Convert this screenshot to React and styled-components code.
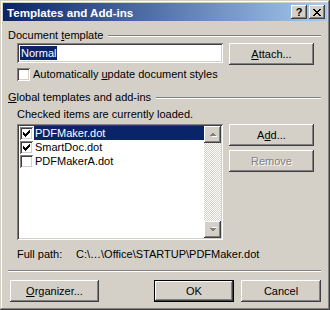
import React from 'react';
import styled, { createGlobalStyle } from 'styled-components';

const GlobalStyle = createGlobalStyle`
  html, body { margin: 0; padding: 0; background: #d4d0c8; }
  body {
    font-family: "Liberation Sans", Arial, sans-serif;
    font-size: 11px;
    color: #000;
  }
`;

const raised = `box-shadow: inset -1px -1px #404040, inset 1px 1px #fff, inset -2px -2px #808080, inset 2px 2px #d4d0c8;`;
const sunken = `box-shadow: inset 1px 1px #808080, inset -1px -1px #fff, inset 2px 2px #404040, inset -2px -2px #d4d0c8;`;

const Window = styled.div`
  width: 330px;
  height: 310px;
  box-sizing: border-box;
  padding: 3px;
  background: #d4d0c8;
  box-shadow: inset -1px -1px #404040, inset 1px 1px #d4d0c8, inset -2px -2px #808080, inset 2px 2px #fff;
  display: flex;
  flex-direction: column;
`;

const TitleBar = styled.div`
  height: 18px;
  display: flex;
  align-items: center;
  padding: 0 2px;
  background: linear-gradient(to right, #0a246a, #a6caf0);
`;

const Title = styled.div`
  flex: 1;
  margin-left: 2px;
  color: #fff;
  font-weight: bold;
  font-size: 11.6px;
`;

const CapButton = styled.div`
  width: 16px;
  height: 14px;
  margin-left: ${({ gap }) => gap || 0}px;
  background: #d4d0c8;
  ${raised}
  display: flex;
  align-items: center;
  justify-content: center;
  font-weight: bold;
  font-size: 11px;
  line-height: 14px;
`;

const Body = styled.div`
  flex: 1;
  display: flex;
  flex-direction: column;
  padding: 0 6px 0 5px;
`;

const GroupHeader = styled.div`
  display: flex;
  align-items: center;
  height: 13px;
  line-height: 13px;
  margin-top: ${({ top }) => top}px;
  gap: 5px;
  &::after {
    content: '';
    flex: 1;
    height: 0;
    border-top: 1px solid #808080;
    border-bottom: 1px solid #fff;
  }
`;

const Row = styled.div`
  display: flex;
  align-items: ${({ align }) => align || 'flex-start'};
  margin-top: ${({ top }) => top}px;
  margin-left: ${({ indent }) => indent || 0}px;
`;

const TextLine = styled.div`
  height: 13px;
  line-height: 13px;
  margin-top: ${({ top }) => top}px;
  margin-left: ${({ indent }) => indent || 0}px;
  white-space: nowrap;
`;

const Input = styled.div`
  width: 206px;
  height: 20px;
  box-sizing: border-box;
  background: #fff;
  ${sunken}
  padding: 3px 3px;
  display: flex;
  align-items: center;
`;

const Selected = styled.span`
  background: #0a246a;
  color: #fff;
  line-height: 14px;
  padding: 0 1px;
`;

const Button = styled.div`
  width: ${({ w }) => w || 85}px;
  height: 22px;
  box-sizing: border-box;
  background: #d4d0c8;
  ${raised}
  border: ${({ primary }) => (primary ? '1px solid #000' : 'none')};
  display: flex;
  align-items: center;
  justify-content: center;
  color: ${({ disabled }) => (disabled ? '#808080' : '#000')};
  text-shadow: ${({ disabled }) => (disabled ? '1px 1px #fff' : 'none')};
  margin-top: ${({ top }) => top || 0}px;
`;

const Check = styled.span`
  width: 13px;
  height: 13px;
  flex: none;
  box-sizing: border-box;
  background: #fff;
  ${sunken}
  display: inline-flex;
  margin-left: ${({ ml }) => ml || 0}px;
`;

const CheckLabel = styled.span`
  margin-left: 3px;
  line-height: 13px;
`;

const ListArea = styled.div`
  display: flex;
  margin-top: 3px;
  margin-left: 9px;
  gap: 6px;
`;

const ListBox = styled.div`
  width: 206px;
  height: 116px;
  box-sizing: border-box;
  padding: 2px;
  background: #fff;
  ${sunken}
  display: flex;
`;

const Items = styled.div`
  flex: 1;
  display: flex;
  flex-direction: column;
`;

const Item = styled.div`
  height: 14px;
  display: flex;
  align-items: center;
`;

const ItemLabel = styled.span`
  flex: 1;
  margin-left: 1px;
  padding-left: 1px;
  line-height: 14px;
  background: ${({ sel }) => (sel ? '#0a246a' : 'transparent')};
  color: ${({ sel }) => (sel ? '#fff' : '#000')};
`;

const ScrollBar = styled.div`
  width: 17px;
  display: flex;
  flex-direction: column;
`;

const ScrollTrack = styled.div`
  flex: 1;
  background: repeating-conic-gradient(#fff 0 25%, #d4d0c8 0 50%) 0 0 / 2px 2px;
`;

const ArrowBtn = styled.div`
  height: 17px;
  background: #d4d0c8;
  ${raised}
  display: flex;
  align-items: center;
  justify-content: center;
`;

const SideButtons = styled.div`
  display: flex;
  flex-direction: column;
`;

const PathRow = styled.div`
  display: flex;
  height: 13px;
  line-height: 13px;
  margin-top: 8px;
  margin-left: 9px;
`;

const PathLabel = styled.span`
  width: 59px;
`;

const Separator = styled.div`
  margin-top: 9px;
  border-top: 1px solid #808080;
  border-bottom: 1px solid #fff;
`;

const Footer = styled.div`
  display: flex;
  justify-content: space-between;
  margin-top: 8px;
  margin-left: 2px;
`;

const FooterRight = styled.div`
  display: flex;
  gap: 7px;
`;

const CheckMark = () => (
  <svg width="13" height="13" viewBox="0 0 13 13" shapeRendering="crispEdges">
    {[2, 3, 4, 3, 2, 1, 0].map((y, i) => (
      <rect key={i} x={3 + i} y={3 + y} width="1" height="3" fill="#000" />
    ))}
  </svg>
);

const CloseGlyph = () => {
  const rows = ['xx....xx', '.xx..xx.', '..xxxx..', '...xx...', '..xxxx..', '.xx..xx.', 'xx....xx'];
  return (
    <svg width="8" height="7" viewBox="0 0 8 7" shapeRendering="crispEdges">
      {rows.flatMap((r, y) =>
        r.split('').map((c, x) => (c === 'x' ? <rect key={`${x}-${y}`} x={x} y={y} width="1" height="1" fill="#000" /> : null))
      )}
    </svg>
  );
};

const Arrow = ({ down }) => (
  <svg width="8" height="5" viewBox="0 0 8 5" shapeRendering="crispEdges" style={down ? { transform: 'scaleY(-1)' } : null}>
    <polygon points="1,4 4,1 7,4" fill="#fff" transform="translate(1,1)" />
    <polygon points="0,4 3.5,0.5 7,4" fill="#808080" />
  </svg>
);

const templates = [
  { name: 'PDFMaker.dot', checked: true, sel: true },
  { name: 'SmartDoc.dot', checked: true },
  { name: 'PDFMakerA.dot', checked: false },
];

export default function App() {
  return (
    <>
      <GlobalStyle />
      <Window>
        <TitleBar>
          <Title>Templates and Add-ins</Title>
          <CapButton>?</CapButton>
          <CapButton gap={2}><CloseGlyph /></CapButton>
        </TitleBar>
        <Body>
          <GroupHeader top={8}>
            <span>Document <u>t</u>emplate</span>
          </GroupHeader>
          <Row top={1} indent={9}>
            <Input><Selected>Normal</Selected></Input>
            <Button style={{ marginLeft: 6 }}><span><u>A</u>ttach...</span></Button>
          </Row>
          <Row top={3} indent={9} align="center">
            <Check />
            <CheckLabel>Automatically <u>u</u>pdate document styles</CheckLabel>
          </Row>
          <GroupHeader top={10}>
            <span><u>G</u>lobal templates and add-ins</span>
          </GroupHeader>
          <TextLine top={4} indent={9}>Checked items are currently loaded.</TextLine>
          <ListArea>
            <ListBox>
              <Items>
                {templates.map((t) => (
                  <Item key={t.name}>
                    <Check ml={1}>{t.checked && <CheckMark />}</Check>
                    <ItemLabel sel={t.sel}>{t.name}</ItemLabel>
                  </Item>
                ))}
              </Items>
              <ScrollBar>
                <ArrowBtn><Arrow /></ArrowBtn>
                <ScrollTrack />
                <ArrowBtn><Arrow down /></ArrowBtn>
              </ScrollBar>
            </ListBox>
            <SideButtons>
              <Button><span>A<u>d</u>d...</span></Button>
              <Button top={4} disabled>Remove</Button>
            </SideButtons>
          </ListArea>
          <PathRow>
            <PathLabel>Full path:</PathLabel>
            <span>C:\…\Office\STARTUP\PDFMaker.dot</span>
          </PathRow>
          <Separator />
          <Footer>
            <Button w={89}><span><u>O</u>rganizer...</span></Button>
            <FooterRight>
              <Button w={80} primary>OK</Button>
              <Button w={80}>Cancel</Button>
            </FooterRight>
          </Footer>
        </Body>
      </Window>
    </>
  );
}
